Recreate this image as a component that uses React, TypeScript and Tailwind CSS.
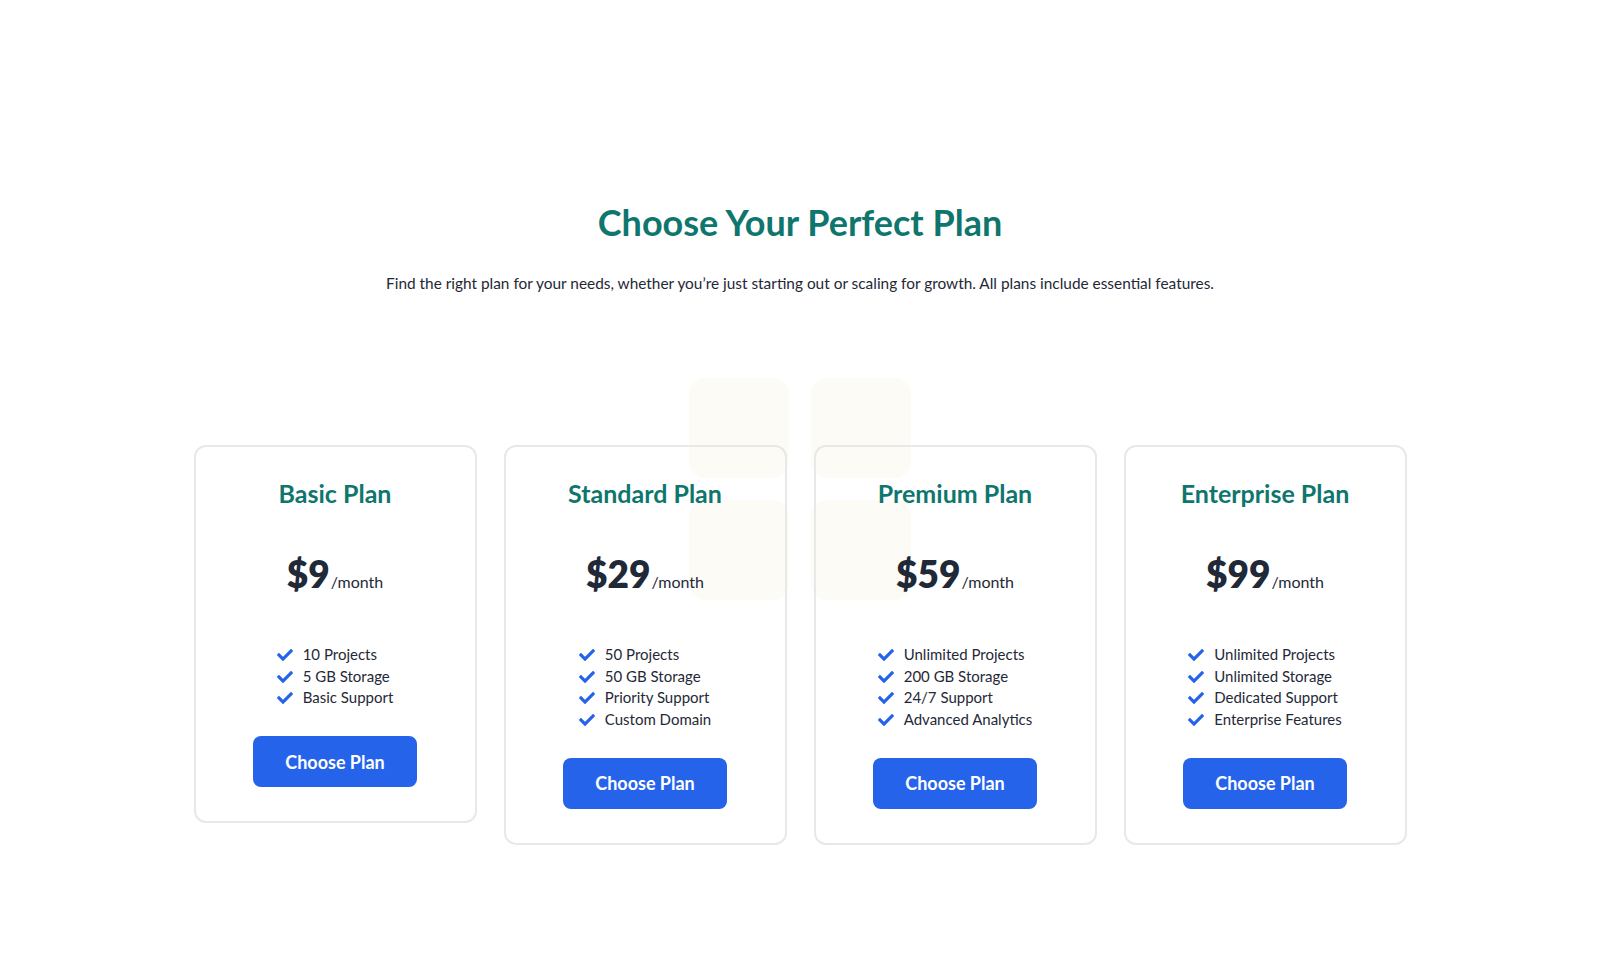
import React from "react";
import { FaCheck } from "react-icons/fa";

type Plan = { name: string; price: string; features: string[] };

const plans: Plan[] = [
  { name: "Basic Plan", price: "$9", features: ["10 Projects", "5 GB Storage", "Basic Support"] },
  { name: "Standard Plan", price: "$29", features: ["50 Projects", "50 GB Storage", "Priority Support", "Custom Domain"] },
  { name: "Premium Plan", price: "$59", features: ["Unlimited Projects", "200 GB Storage", "24/7 Support", "Advanced Analytics"] },
  { name: "Enterprise Plan", price: "$99", features: ["Unlimited Projects", "Unlimited Storage", "Dedicated Support", "Enterprise Features"] },
];

function Card({ plan }: { plan: Plan }) {
  return (
    <div className="relative flex flex-col items-center rounded-xl border-2 border-[#e8e8e8] px-6 pt-[30px] pb-[34px]">
      <h3 className="text-[25px] leading-8 font-bold text-[#0f766e]">{plan.name}</h3>
      <div className="mt-[45px] flex items-baseline">
        <span className="text-[37px] leading-10 font-extrabold text-[#1f2937]">{plan.price}</span>
        <span className="ml-[1px] text-base text-[#1f2937]">/month</span>
      </div>
      <ul className="mt-[50px] flex flex-col">
        {plan.features.map((f) => (
          <li key={f} className="flex items-center gap-[10px] text-[15px] leading-[21.7px] text-[#1f2937]">
            <FaCheck className="h-[16px] w-[16px] text-[#2563eb]" />
            <span>{f}</span>
          </li>
        ))}
      </ul>
      <button className="mt-[27px] flex h-[51px] w-[164px] items-center justify-center rounded-lg bg-[#2563eb] text-lg font-bold text-white">
        Choose Plan
      </button>
    </div>
  );
}

export default function App() {
  return (
    <div className="min-h-[978px] w-full bg-white pt-[202px]" style={{ fontFamily: "Lato, 'Noto Sans', sans-serif" }}>
      <h1 className="text-center text-4xl leading-10 font-bold text-[#0f766e]">Choose Your Perfect Plan</h1>
      <p className="mt-[29px] text-center text-[15.4px] leading-6 text-[#1f2937]">
        Find the right plan for your needs, whether you’re just starting out or scaling for growth. All plans include essential features.
      </p>
      <div className="relative mx-auto mt-[150px] w-[1213px]">
        <div className="absolute left-1/2 top-[-67px] grid -translate-x-1/2 grid-cols-2 gap-[22px]">
          <div className="h-[100px] w-[100px] rounded-2xl bg-[#fcfbf5]" />
          <div className="h-[100px] w-[100px] rounded-2xl bg-[#fcfbf5]" />
          <div className="h-[100px] w-[100px] rounded-2xl bg-[#fcfbf5]" />
          <div className="h-[100px] w-[100px] rounded-2xl bg-[#fcfbf5]" />
        </div>
        <div className="relative grid grid-cols-4 items-start gap-[27px]">
          {plans.map((p) => (
            <Card key={p.name} plan={p} />
          ))}
        </div>
      </div>
    </div>
  );
}
